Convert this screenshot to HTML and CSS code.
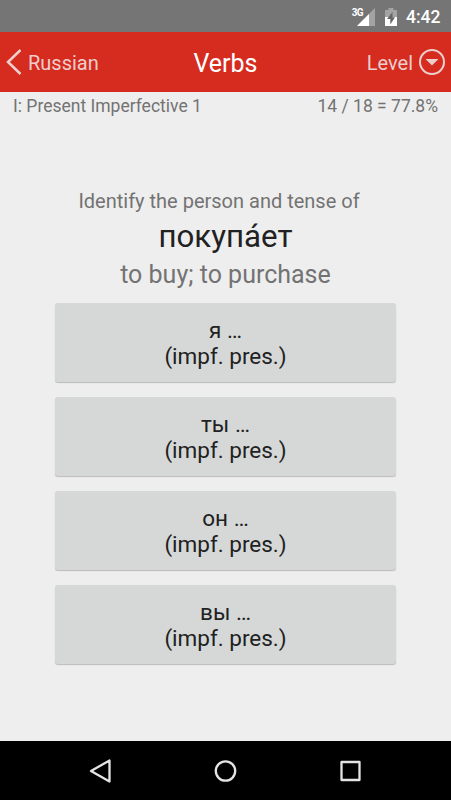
FILE: index.html
```
<!DOCTYPE html>
<html lang="en">
<head>
    <meta charset="UTF-8">
    <title>Verbs</title>
    <link rel="stylesheet" href="styles.css">
</head>
<body>
    <div class="statusBar">
        <span class="network">3G</span>
        <svg class="signal" width="18" height="18" viewBox="0 0 18 18">
            <path d="M18 0V18H0Z" fill="#a3a3a3"/>
            <path d="M12 6V18H0Z" fill="#fff"/>
        </svg>
        <svg class="battery" width="12" height="18" viewBox="0 0 12 18">
            <path d="M3.5 0h5v2H12v16H0V2h3.5z" fill="#a3a3a3"/>
            <path d="M0 9h12v9H0z" fill="#fff"/>
            <path d="M7.5 4L2 11h3.3v5.5L10 9.3H7.5z" fill="#666"/>
        </svg>
        <span class="clock">4:42</span>
    </div>
    <header class="toolbar">
        <div class="back">
            <svg width="16" height="28" viewBox="0 0 16 28">
                <path d="M14.5 2L2 14L14.5 26" fill="none" stroke="#edcfcd" stroke-width="2.5"/>
            </svg>
            <span>Russian</span>
        </div>
        <h1>Verbs</h1>
        <div class="level">
            <span>Level</span>
            <svg width="28" height="28" viewBox="0 0 28 28">
                <circle cx="14" cy="14" r="12" fill="none" stroke="#edcfcd" stroke-width="2"/>
                <path d="M7.5 11H20.5L14 17.5Z" fill="#edcfcd"/>
            </svg>
        </div>
    </header>
    <div class="progress">
        <span class="lesson">I: Present Imperfective 1</span>
        <span class="score">14 / 18 = 77.8%</span>
    </div>
    <main>
        <p class="prompt">Identify the person and tense of</p>
        <p class="word">покупа́ет</p>
        <p class="meaning">to buy; to purchase</p>
        <div class="answers">
            <button>я …<br>(impf. pres.)</button>
            <button>ты …<br>(impf. pres.)</button>
            <button>он …<br>(impf. pres.)</button>
            <button>вы …<br>(impf. pres.)</button>
        </div>
    </main>
    <nav class="navBar">
        <svg width="24" height="26" viewBox="0 0 24 26">
            <path d="M2 13L20.5 2.5V23.5Z" fill="none" stroke="#e4e4e4" stroke-width="2.3" stroke-linejoin="round"/>
        </svg>
        <svg width="24" height="26" viewBox="0 0 24 26">
            <circle cx="11.5" cy="13" r="9.7" fill="none" stroke="#e4e4e4" stroke-width="2.3"/>
        </svg>
        <svg width="24" height="26" viewBox="0 0 24 26">
            <rect x="2.5" y="4" width="18" height="18" fill="none" stroke="#e4e4e4" stroke-width="2.3" stroke-linejoin="round"/>
        </svg>
    </nav>
</body>
</html>
```
FILE: styles.css
```
body {
    display: flex;
    flex-direction: column;
    width: 451px;
    height: 800px;
    margin: 0;
    overflow: hidden;
    background: #eee;
    color: #737373;
    font-family: Roboto, sans-serif;
}
svg {
    display: block;
    flex: none;
}
.statusBar {
    display: flex;
    justify-content: flex-end;
    height: 32px;
    box-sizing: border-box;
    padding: 8px 10.5px 0 0;
    background: #757575;
    color: white;
}
.network {
    margin-right: -6px;
    font: bold 10px/9px Roboto, sans-serif;
    letter-spacing: -0.6px;
}
.battery {
    margin: 0 9px 0 10px;
}
.clock {
    font-size: 17.5px;
    font-weight: 500;
    line-height: 19px;
}
.toolbar {
    display: grid;
    grid-template-columns: 1fr auto 1fr;
    align-items: center;
    height: 60px;
    background: #d62b1f;
    color: #edcfcd;
    font-size: 20px;
}
.toolbar span,
.toolbar h1 {
    padding-top: 2px;
}
.toolbar h1 {
    margin: 0;
    color: white;
    font-size: 25px;
    font-weight: normal;
}
.back {
    display: flex;
    align-items: center;
    gap: 6px;
    padding-left: 6px;
}
.level {
    display: flex;
    align-items: center;
    justify-content: flex-end;
    gap: 5px;
    padding-right: 5px;
}
.progress {
    display: flex;
    justify-content: space-between;
    padding: 3px 13px 0;
    font-size: 17.5px;
    line-height: 22px;
}
main {
    flex: 1;
    padding: 72px 55px 0;
    text-align: center;
}
main p {
    margin: 0;
}
.prompt {
    padding-right: 13px;
    font-size: 20px;
    line-height: 24px;
}
.word {
    color: #212121;
    font-size: 31.25px;
    line-height: 48px;
}
.meaning {
    font-size: 25px;
    line-height: 28px;
}
.answers {
    display: grid;
    gap: 15px;
    margin-top: 14px;
}
.answers button {
    height: 79px;
    padding: 1px 0 0;
    border: none;
    border-radius: 3px;
    background: #d6d8d7;
    box-shadow: 0 1px 1px #bbb;
    color: #212121;
    font: 22.5px/26px Roboto, sans-serif;
}
.navBar {
    display: flex;
    align-items: center;
    justify-content: center;
    gap: 101px;
    height: 59px;
    background: black;
}
```
